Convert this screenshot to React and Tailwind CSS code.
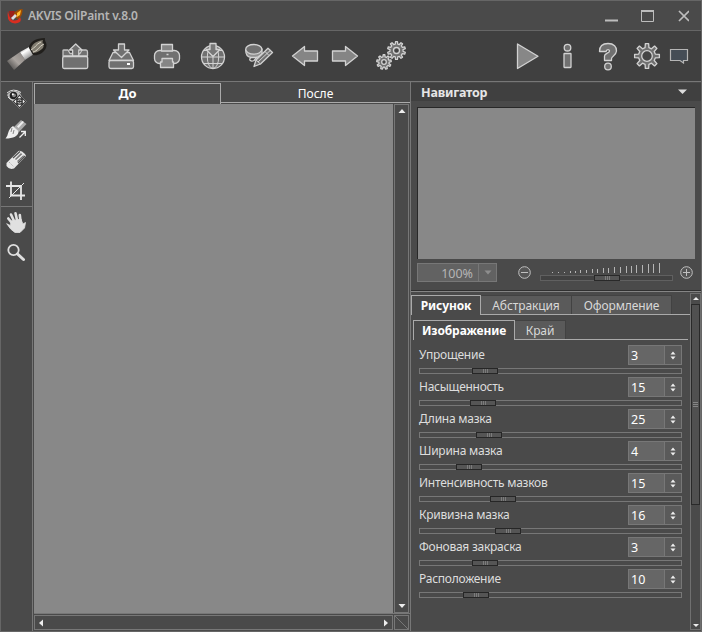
import React from "react";

const params = [
  { name: "Упрощение", value: 3, pos: 53 },
  { name: "Насыщенность", value: 15, pos: 51 },
  { name: "Длина мазка", value: 25, pos: 57 },
  { name: "Ширина мазка", value: 4, pos: 37 },
  { name: "Интенсивность мазков", value: 15, pos: 71 },
  { name: "Кривизна мазка", value: 16, pos: 76 },
  { name: "Фоновая закраска", value: 3, pos: 53 },
  { name: "Расположение", value: 10, pos: 44 },
];

const gearPath = (cx, cy, outer, inner, teeth) => {
  const pts = [];
  for (let i = 0; i < teeth; i++) {
    [[-0.29, inner], [-0.17, outer], [0.17, outer], [0.29, inner]].forEach(([o, r]) => {
      const a = ((i + o) / teeth) * Math.PI * 2 - Math.PI / 2;
      pts.push(`${(cx + r * Math.cos(a)).toFixed(2)} ${(cy + r * Math.sin(a)).toFixed(2)}`);
    });
  }
  return `M${pts.join("L")}Z`;
};

function Icon({ children, className = "" }) {
  return (
    <svg viewBox="0 0 32 32" fill="#707070" stroke="#d2d2d2" strokeWidth="1.3" strokeLinejoin="round" className={`w-8 h-8 shrink-0 ${className}`}>
      {children}
    </svg>
  );
}

function Toolbar() {
  return (
    <div className="h-[50px] shrink-0 bg-[#404040] flex items-start pt-[9px] pl-[5px]">
      <svg viewBox="0 0 42 34" className="w-[42px] h-[34px] shrink-0 -mt-[3px]">
        <defs>
          <linearGradient id="handle" x1="0" y1="1" x2="1" y2="0">
            <stop offset="0" stopColor="#8b8580" stopOpacity="0" />
            <stop offset="0.5" stopColor="#aaa49f" />
            <stop offset="1" stopColor="#898481" />
          </linearGradient>
          <linearGradient id="ferrule" x1="0" y1="0" x2="0.7" y2="1">
            <stop offset="0" stopColor="#888" />
            <stop offset="0.4" stopColor="#fff" />
            <stop offset="1" stopColor="#777" />
          </linearGradient>
        </defs>
        <path d="M1 24L14 15L19 23L8 33Z" fill="url(#handle)" />
        <path d="M14 15L23 10L28 17L19 23Z" fill="url(#ferrule)" />
        <path d="M23 11C23 5 30 1 39 1C38 4 42 6 40 11C37 17 31 19 27 18Z" fill="#211f1c" />
        <path d="M25 11C27 6 31 4 37 3C35 7 40 8 36 12C32 15 29 16 27 16Z" fill="#817c70" />
        <path d="M25 13C29 11 30 7 35 5M27 15C32 14 32 10 38 7" fill="none" stroke="#d6d2c4" strokeWidth="1" />
      </svg>
      <Icon className="ml-[11px]">
        <path d="M4 13V10.500Q4 10 5 10H9L11 13.500H21L23 10H27Q28.500 10 28.500 12V16H4Z" stroke="#c5c5c5" />
        <rect x="3.700" y="16.500" width="25" height="12" rx="1.500" />
        <path d="M16.700 4L23 10H19.800V15.800H13.600V10H10.400Z" />
      </Icon>
      <Icon className="ml-[14px]">
        <path d="M8 12.500H24.500L28.500 20.500H4Z" />
        <rect x="4" y="20.500" width="24.500" height="8" rx="1.800" />
        <path d="M13.500 4H19.500V10H24L16.500 17.500L8.500 10H13.500Z" />
        <rect x="22" y="23" width="3" height="2" fill="#fff" stroke="none" />
      </Icon>
      <Icon className="ml-[14px]">
        <rect x="3.500" y="10.500" width="25" height="13" rx="5" />
        <path d="M10.500 4.500H21.500V11H10.500Z" fill="#858585" />
        <path d="M11 18.500H21.500V22H22.500V27.500H9.500V22H11Z" fill="#858585" />
        <path d="M15.500 14.500H17.500" strokeWidth="1.500" />
      </Icon>
      <Icon className="ml-[14px]" >
        <circle cx="16" cy="17" r="11.500" />
        <ellipse cx="16" cy="17" rx="5.700" ry="11.500" fill="none" strokeWidth="1" />
        <path d="M4.500 17H27.500M7 23.500H25M16 5.500V28.500M7 10.500H25" strokeWidth="1" />
        <path d="M13 3.500H19V9.500H23L16 16.500L9 9.500H13Z" fill="#777" />
      </Icon>
      <Icon className="ml-[14px]">
        <path d="M2.700 10C2.700 14 4 17 8 17.500H14L19 14V9Z" fill="#909090" />
        <ellipse cx="10.800" cy="9.300" rx="8.100" ry="4.800" />
        <path d="M8 17.500C5 20 8 22 11 20.500L14 17" fill="none" />
        <path d="M25 8.300L29.500 12.500L17.500 24L11 26.500L13 20Z" />
        <path d="M27.300 10.400L15 22M13 20L17.500 24M22 11.500L26 15.500" strokeWidth="1" />
      </Icon>
      <Icon className="ml-[14px]">
        <path d="M3.500 16L15.500 6.500V11H28.500V21H15.500V25.500Z" fill="#858585" />
      </Icon>
      <Icon className="ml-[8px]">
        <path d="M28.500 16L16.500 6.500V11H3.500V21H16.500V25.500Z" fill="#858585" />
      </Icon>
      <Icon className="ml-[14px]">
        <path d={gearPath(21.500, 10.500, 9, 6.600, 10)} />
        <circle cx="21.500" cy="10.500" r="3" fill="#444" />
        <path d={gearPath(9, 22, 7.300, 5.200, 9)} />
        <circle cx="9" cy="22" r="2.300" fill="#444" />
      </Icon>
      <Icon className="ml-[105px]">
        <path d="M5.500 4L26 16.200L5.500 28.500Z" fill="#878787" />
      </Icon>
      <Icon className="ml-[7px]">
        <circle cx="16.500" cy="7.700" r="3.300" />
        <rect x="13" y="13.500" width="7" height="14" rx="0.500" />
      </Icon>
      <Icon className="ml-[9px]">
        <path d="M7.500 11.500C7.500 6 11 3.500 16 3.500C22 3.500 24.700 7 24.500 11C24.200 15.500 19.500 16 19.500 18.500V20.500H12.500V16C12.500 13 17.500 13.300 17.500 11C17.500 9 14.500 9 14 11.500Z" />
        <circle cx="16" cy="26.500" r="3.300" />
      </Icon>
      <Icon className="ml-[7px]">
        <path d={gearPath(16, 16, 12.500, 8.500, 8)} />
        <circle cx="16" cy="16" r="5.300" fill="#444" />
      </Icon>
      <svg viewBox="0 0 20 16" className="w-5 h-4 shrink-0 mt-[8px] ml-[6px]">
        <path d="M1.500 1.500H18.500V12.500H14.500V15L11 12.500H1.500Z" fill="#454d56" stroke="#b5b5b5" strokeWidth="1.200" />
      </svg>
    </div>
  );
}

function SideTools() {
  return (
    <div className="w-[32px] shrink-0 border-r border-[#777777] pr-px flex flex-col items-center">
      <svg viewBox="0 0 24 24" className="w-6 h-6 mt-[6px]">
        <path d="M3 7C6 2.500 12 2 16 5L18 9L15 11C11 14 6 13 3 7Z" fill="#bbb" />
        <path d="M3 5Q9 -0.500 17 4.500M4 9Q8 14 14 12.500" fill="none" stroke="#e0e0e0" />
        <circle cx="9.500" cy="7.500" r="3.800" fill="#222" />
        <circle cx="10" cy="7.300" r="1.900" fill="#888" />
        <circle cx="8.800" cy="6.200" r="1" fill="#fff" />
        <path d="M15.500 6.500L22.500 13.500L15.500 20.500L8.500 13.500Z" fill="#333" stroke="#999" strokeWidth="0.600" />
        <path d="M15.500 8L17.500 10.200H13.500ZM15.500 19L17.500 16.800H13.500ZM10 13.500L12.200 11.500V15.500ZM21 13.500L18.800 11.500V15.500Z" fill="#eee" />
        <path d="M13.500 12.500H15V11M17.500 12.500H16V11M13.500 14.500H15V16M17.500 14.500H16V16" fill="none" stroke="#ccc" strokeWidth="0.700" />
      </svg>
      <svg viewBox="0 0 24 24" className="w-6 h-6 mt-[6px]">
        <path d="M10 9L17 2L22.500 6L15 14Z" fill="#aaa" />
        <path d="M13 8.500L18.500 3L20 4L14.500 10Z" fill="#eee" />
        <path d="M9 8L14.500 13C15 18 9 20.500 1.500 20.500C5 17 3 12 9 8Z" fill="#eee" />
        <path d="M8 10L7 14M10 12L9 16" stroke="#888" />
        <path d="M15.500 19.500L21 14M17 13.500H21.300V18" fill="none" stroke="#eee" strokeWidth="1.300" />
      </svg>
      <svg viewBox="0 0 24 24" className="w-6 h-6 mt-[6px]">
        <path d="M2.500 15L14.500 3Q17 2 21 6L22 8L10 20.500Q5 22 2.500 18Z" fill="#e8e8e8" />
        <path d="M11 11L17 5L20 8L14 14Z" fill="#777" />
        <path d="M9 10L16 3.500M14 15L21 8" stroke="#555" strokeWidth="1.300" />
        <path d="M12 13L19 6.500" stroke="#eee" strokeWidth="1.500" />
        <path d="M5 14L10 19" stroke="#999" strokeDasharray="1 1.500" />
      </svg>
      <svg viewBox="0 0 24 24" className="w-6 h-6 mt-[6px]">
        <path d="M2 8H17V22M7 3.500V17.500H21" fill="none" stroke="#e6e6e6" strokeWidth="1.800" />
        <path d="M5 20L20 5" stroke="#e6e6e6" strokeWidth="1" />
      </svg>
      <div className="w-[32px] border-t border-[#777777] mt-[4px]" />
      <svg viewBox="0 0 24 24" className="w-6 h-6 mt-[3px]" fill="none" stroke="#e0e0e0" strokeWidth="2.600" strokeLinecap="round">
        <path d="M8 13L4.300 8.500M10 11L7 4.500M13 10L11.500 3.200M16.500 11L15.800 5" />
        <path d="M3 14L6.500 15.500L7 11L17 9Q18 12 19 14L21.500 12.500L20.500 18L16 22.500H11Q6.500 20 3 14Z" fill="#e0e0e0" strokeWidth="0.800" strokeLinejoin="round" />
      </svg>
      <svg viewBox="0 0 24 24" className="w-6 h-6 mt-[7px]" fill="none" stroke="#dedede">
        <circle cx="9.500" cy="9" r="5.200" strokeWidth="1.800" />
        <path d="M13.500 13L19.500 18.500" strokeWidth="3" strokeLinecap="round" />
      </svg>
    </div>
  );
}

function Arrow({ d }) {
  return (
    <svg viewBox="0 0 8 8" className="w-2 h-2 shrink-0" fill="#ededed">
      <path d={d} />
    </svg>
  );
}

function Workspace() {
  return (
    <div className="w-[378px] shrink-0 flex flex-col pl-px border-r border-[#777777]">
      <div className="flex h-[21px] shrink-0 mt-px text-[12px] leading-[19px] text-center text-white">
        <div className="w-[187px] border-l border-t border-r border-[#aaaaaa] font-bold text-[13px]">До</div>
        <div className="flex-1 border-b border-[#aaaaaa] pt-px mb-px">После</div>
      </div>
      <div className="flex h-[509px] shrink-0">
        <div className="flex-1 bg-[#888888]" />
        <div className="w-[15px] ml-px mr-px border border-[#777777] flex flex-col items-center justify-between py-[2px]">
          <Arrow d="M0.500 6L4 2L7.500 6Z" />
          <Arrow d="M0.500 2H7.500L4 6Z" />
        </div>
      </div>
      <div className="flex h-[17px] shrink-0 border-t border-[#777777] pt-px">
        <div className="flex-1 h-[15px] border border-[#777777] flex items-center justify-between px-[2px]">
          <Arrow d="M6 0.500L2 4L6 7.500Z" />
          <Arrow d="M2 0.500L6 4L2 7.500Z" />
        </div>
        <div className="w-[15px] h-[15px] mr-px ml-px border border-[#777777]">
          <svg viewBox="0 0 13 13" className="w-[13px] h-[13px]">
            <path d="M0 0L13 13" stroke="#777" />
          </svg>
        </div>
      </div>
    </div>
  );
}

function Grip() {
  return (
    <span className="flex gap-px">
      <i className="w-px h-1 bg-[#7c7c7c]" />
      <i className="w-px h-1 bg-[#7c7c7c]" />
      <i className="w-px h-1 bg-[#7c7c7c]" />
    </span>
  );
}

function Navigator() {
  return (
    <div className="h-[210px] shrink-0 border-b border-[#858585]">
      <div className="h-[207px] border-b border-[#303030] box-content">
        <div className="h-[18px] bg-[#404040] mt-px pl-[10px] pr-[14px] flex items-center justify-between text-[12.500px] font-bold text-[#e6e6e6]">
          <span className="tracking-[-0.2px] pt-[2px]">Навигатор</span>
          <svg viewBox="0 0 9 6" className="w-[9px] h-[6px]"><path d="M0 0.500H9L4.500 5Z" fill="#ddd" /></svg>
        </div>
        <div className="ml-[6px] mt-[6px] w-[278px] h-[152px] bg-[#888888] border-l border-t border-[#282828]" />
        <div className="flex mt-[4px] ml-[6px] h-[20px]">
          <div className="flex w-[80px] h-[19px] border border-[#777777] bg-[#626262] text-[#b5b5b5] text-[12.500px]">
            <div className="w-[61px] border-r border-[#777777] text-right pr-[5px] leading-[19px]">100%</div>
            <div className="flex-1 flex items-center justify-center">
              <svg viewBox="0 0 8 5" className="w-[8px] h-[5px]"><path d="M0.500 0.500H7.500L4 4.500Z" fill="#8e8e8e" /></svg>
            </div>
          </div>
          <svg viewBox="0 0 14 14" className="w-[14px] h-[14px] ml-[21px] mt-[3px]" fill="#555" stroke="#c0c0c0">
            <circle cx="6.500" cy="6.500" r="5.800" />
            <path d="M3 6.500H10" />
          </svg>
          <div className="w-[133px] ml-[8px]">
            <div className="h-[10px] flex items-end pl-[12px]">
              {Array.from({ length: 20 }, (_, i) => (
                <i key={i} className="w-px bg-[#b5b5b5] shrink-0" style={{ height: Math.max(1, Math.round(i / 2)), marginRight: i % 5 < 2 ? 5 : i % 5 === 4 ? 4 : 5 - (i % 2) }} />
              ))}
            </div>
            <div className="h-[6px] mt-[2px] border border-[#606060] bg-[#424242] flex items-center pl-[53px]">
              <div className="w-[26px] h-[6px] shrink-0 bg-[#555] border border-[#292929] flex items-center justify-center"><Grip /></div>
            </div>
          </div>
          <svg viewBox="0 0 14 14" className="w-[14px] h-[14px] ml-[7px] mt-[3px]" fill="#555" stroke="#c0c0c0">
            <circle cx="6.500" cy="6.500" r="5.800" />
            <path d="M3 6.500H10M6.500 3V10" />
          </svg>
        </div>
      </div>
    </div>
  );
}

function ParamRow({ name, value, pos }) {
  return (
    <div className="h-8 pl-[6px]">
      <div className="flex h-[20px] w-[263px] justify-between">
        <span className="text-[12px] leading-[20px] tracking-[-0.25px] text-[#dddddd]">{name}</span>
        <div className="w-[54px] h-[20px] border border-[#777777] bg-[#5a5a5a] flex">
          <div className="w-[36px] bg-[#666666] border-r border-[#777777] pl-[2px] text-[12.500px] leading-[20px] text-white">{value}</div>
          <div className="flex-1 flex items-center justify-center">
            <svg viewBox="0 0 6 9" className="w-[6px] h-[9px]"><path d="M0.500 3.500L3 0.500L5.500 3.500ZM0.500 5.500H5.500L3 8.500Z" fill="#eee" /></svg>
          </div>
        </div>
      </div>
      <div className="w-[263px] h-[6px] mt-[3px] border border-[#777777] flex items-center">
        <div className="w-[26px] h-[6px] shrink-0 bg-[#555555] border border-[#262626] flex items-center justify-center" style={{ marginLeft: pos - 1 }}>
          <Grip />
        </div>
      </div>
    </div>
  );
}

function Settings() {
  return (
    <div className="flex-1 flex">
      <div className="w-[279px] shrink-0">
        <div className="flex mt-[3px] h-[20px] text-[12px] leading-[20px] tracking-[-0.1px] text-[#d8d8d8] text-center whitespace-nowrap">
          <div className="w-[70px] border-l border-t border-r border-[#aaaaaa] font-bold text-white leading-[19px]">Рисунок</div>
          <div className="w-[91px] border-b border-[#aaaaaa]"><div className="h-[19px] bg-[#5a5a5a] border-t border-r border-[#424242]">Абстракция</div></div>
          <div className="w-[100px] border-b border-[#aaaaaa]"><div className="h-[19px] bg-[#5a5a5a] border-t border-r border-[#424242]">Оформление</div></div>
          <div className="flex-1 border-b border-[#aaaaaa]" />
        </div>
        <div className="flex mt-[5px] ml-[2px] mr-[2px] h-[20px] text-[12px] leading-[20px] tracking-[-0.1px] text-[#d8d8d8] text-center whitespace-nowrap">
          <div className="w-[102px] border-l border-t border-r border-[#aaaaaa] font-bold text-white leading-[19px]">Изображение</div>
          <div className="w-[51px] border-b border-[#aaaaaa]"><div className="h-[19px] bg-[#5a5a5a] border-t border-r border-[#424242]">Край</div></div>
          <div className="flex-1 border-b border-[#aaaaaa]" />
        </div>
        <div className="mt-[5px] ml-[2px]">
          {params.map((p) => (
            <ParamRow key={p.name} {...p} />
          ))}
        </div>
      </div>
      <div className="w-[11px] border border-[#707070] mt-px mb-[1px] flex flex-col items-center">
        <Arrow d="M1 6L4 3L7 6Z" />
        <div className="w-[9px] h-[201px] mt-[2px] bg-[#505050] border border-[#292929] flex flex-col items-center justify-center gap-px shrink-0">
          <i className="w-[5px] h-px bg-[#858585]" />
          <i className="w-[5px] h-px bg-[#858585]" />
          <i className="w-[5px] h-px bg-[#858585]" />
        </div>
        <div className="flex-1" />
        <Arrow d="M1 3H7L4 6Z" />
      </div>
    </div>
  );
}

export default function App() {
  return (
    <div className="w-[702px] h-[632px] overflow-hidden bg-[#4a4a4a] border border-[#666666] flex flex-col font-['Noto_Sans',sans-serif] text-[#d8d8d8]">
      <div className="h-[30px] shrink-0 border-b border-[#666666] flex items-center pl-[6px] pr-[12px]">
        <svg viewBox="0 0 16 16" className="w-4 h-4">
          <path d="M1 3Q2 9 5 12Q10 14 13 9Q16 15 8 15.500Q-1 15 1 3Z" fill="#d92d20" />
          <path d="M2 3H8L6 11L3 9Z" fill="#9d2119" />
          <path d="M7 5Q11 1 15.500 1Q16 8 11 11L7 9Z" fill="#a04d00" />
          <path d="M10 5L14 2L13 7L10 9Z" fill="#ffbd2e" />
          <path d="M4 10L8 6L10 8L6 12Z" fill="#ddd" />
        </svg>
        <h1 className="ml-[5px] text-[12px] tracking-[-0.2px] font-semibold text-[#b5b5b5] whitespace-nowrap">AKVIS OilPaint v.8.0</h1>
        <svg viewBox="0 0 86 16" className="w-[86px] h-4 ml-auto" fill="none" stroke="#bdbdbd">
          <path d="M2 12.500H15" strokeWidth="2" />
          <path d="M38.500 2.500H50.500V13.500H38.500Z" strokeWidth="1" />
          <path d="M38 3H51" strokeWidth="2" />
          <path d="M76 3L86 13M86 3L76 13" strokeWidth="1.700" />
        </svg>
      </div>
      <Toolbar />
      <div className="flex-1 min-h-0 border-t border-[#777777] flex">
        <SideTools />
        <Workspace />
        <div className="flex-1 min-w-0 flex flex-col">
          <Navigator />
          <Settings />
        </div>
      </div>
    </div>
  );
}
